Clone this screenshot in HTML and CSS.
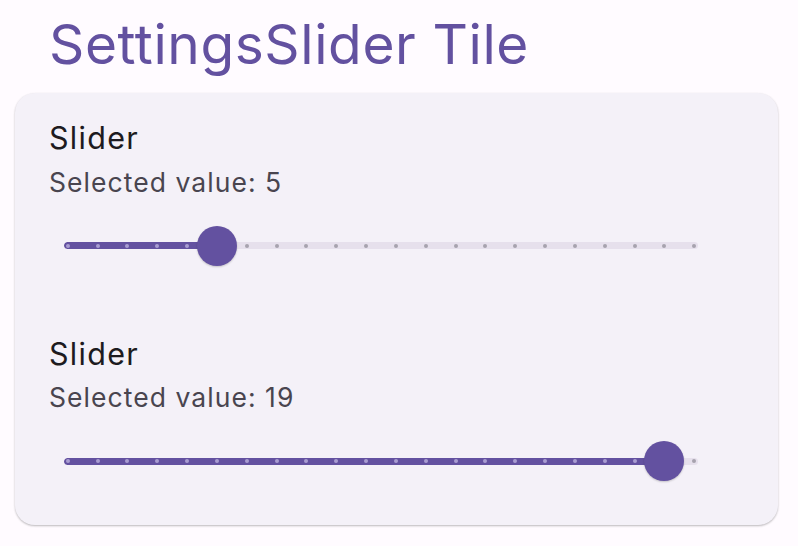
FILE: index.html
```html
<!DOCTYPE html>
<html lang="en">
<head>
<meta charset="utf-8">
<title>SettingsSlider Tile</title>
<link rel="stylesheet" href="styles.css">
</head>
<body>
<main class="page">
  <h1 class="page-title">SettingsSlider Tile</h1>
  <section class="card">
    <div class="tile">
      <div class="tile-title">Slider</div>
      <div class="tile-subtitle">Selected value: 5</div>
      <div class="slider">
        <div class="track">
          <div class="track-active" style="width: calc(3.8px + 5 / 21 * (100% - 7.6px))"></div>
          <div class="ticks">
            <span class="tick on"></span><span class="tick on"></span><span class="tick on"></span><span class="tick on"></span><span class="tick on"></span><span class="tick on"></span><span class="tick"></span><span class="tick"></span><span class="tick"></span><span class="tick"></span><span class="tick"></span><span class="tick"></span><span class="tick"></span><span class="tick"></span><span class="tick"></span><span class="tick"></span><span class="tick"></span><span class="tick"></span><span class="tick"></span><span class="tick"></span><span class="tick"></span><span class="tick"></span>
          </div>
        </div>
        <div class="thumb" style="left: calc(3.8px + 5 / 21 * (100% - 7.6px))"></div>
      </div>
    </div>
    <div class="tile tile-second">
      <div class="tile-title">Slider</div>
      <div class="tile-subtitle">Selected value: 19</div>
      <div class="slider">
        <div class="track">
          <div class="track-active" style="width: calc(3.8px + 20 / 21 * (100% - 7.6px))"></div>
          <div class="ticks">
            <span class="tick on"></span><span class="tick on"></span><span class="tick on"></span><span class="tick on"></span><span class="tick on"></span><span class="tick on"></span><span class="tick on"></span><span class="tick on"></span><span class="tick on"></span><span class="tick on"></span><span class="tick on"></span><span class="tick on"></span><span class="tick on"></span><span class="tick on"></span><span class="tick on"></span><span class="tick on"></span><span class="tick on"></span><span class="tick on"></span><span class="tick on"></span><span class="tick on"></span><span class="tick on"></span><span class="tick"></span>
          </div>
        </div>
        <div class="thumb" style="left: calc(3.8px + 20 / 21 * (100% - 7.6px))"></div>
      </div>
    </div>
  </section>
</main>
</body>
</html>
```

FILE: styles.css
```css
html, body {
  margin: 0;
  padding: 0;
  background: #fffbff;
}

body {
  font-family: Inter, "Noto Sans", sans-serif;
  width: 798px;
  height: 546px;
  overflow: hidden;
}

.page {
  display: flex;
  flex-direction: column;
  padding: 11px 20px 0 15px;
}

.page-title {
  margin: 0 0 16px 34px;
  font-size: 55px;
  line-height: 66px;
  font-weight: 400;
  color: #6351a0;
  letter-spacing: 0.6px;
}

.card {
  background: #f4f1f8;
  border-radius: 20px;
  box-shadow: 0 1px 2px rgba(0, 0, 0, 0.22), 0 1px 3px rgba(0, 0, 0, 0.06);
  padding: 27px 34px 44px 34px;
  display: flex;
  flex-direction: column;
  gap: 70px;
}

.tile {
  display: flex;
  flex-direction: column;
}

.tile-title {
  font-size: 30.5px;
  line-height: 36px;
  color: #1d1b20;
  letter-spacing: 1.3px;
}

.tile-subtitle {
  margin-top: 9.5px;
  font-size: 26.5px;
  line-height: 32px;
  color: #49454f;
  letter-spacing: 1.05px;
}

.slider {
  position: relative;
  margin: 28px 0 0 15px;
  width: 634px;
  height: 40px;
  display: flex;
  align-items: center;
}

.track {
  position: relative;
  width: 100%;
  height: 7px;
  border-radius: 4px;
  background: #e6e0ec;
  overflow: hidden;
}

.track-active {
  height: 100%;
  background: #6351a0;
  border-radius: 4px 0 0 4px;
}

.ticks {
  position: absolute;
  inset: 0;
  display: flex;
  justify-content: space-between;
  align-items: center;
  padding: 0 1.8px;
}

.tick {
  width: 4px;
  height: 4px;
  border-radius: 50%;
  background: #a7a2ae;
}

.tick.on {
  background: #a99dd1;
}

.thumb {
  position: absolute;
  top: 0;
  width: 40px;
  height: 40px;
  border-radius: 50%;
  background: #6351a0;
  transform: translateX(-50%);
  box-shadow: 0 1px 2px rgba(0, 0, 0, 0.2);
}
```
